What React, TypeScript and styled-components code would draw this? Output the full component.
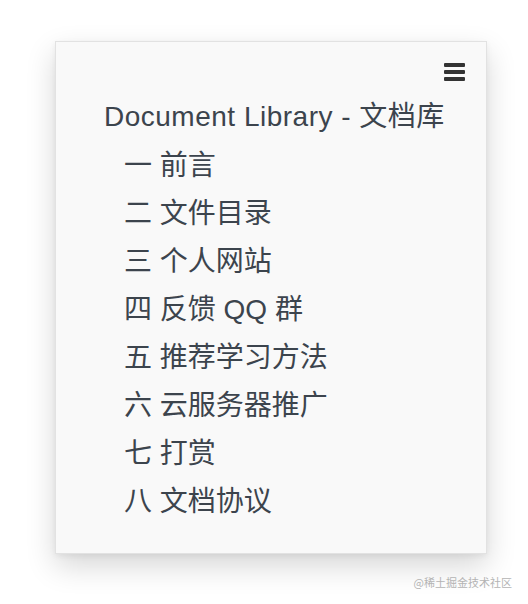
import React, { FC } from 'react';
import styled, { createGlobalStyle } from 'styled-components';

const GlobalStyle = createGlobalStyle`
  html, body {
    margin: 0;
    padding: 0;
    background: #ffffff;
  }
  body {
    font-family: 'Helvetica Neue', 'Liberation Sans', 'Noto Sans CJK SC', sans-serif;
  }
`;

const Page = styled.div`
  position: relative;
  width: 528px;
  height: 604px;
  padding: 41px 0 0 55px;
  box-sizing: border-box;
  overflow: hidden;
`;

const Card = styled.nav`
  width: 432px;
  height: 513px;
  box-sizing: border-box;
  background: #f9f9f9;
  border: 1px solid #e2e2e2;
  box-shadow: 0 12px 28px rgba(0, 0, 0, 0.16), 0 2px 6px rgba(0, 0, 0, 0.06);
  padding: 21px 21px 0 48px;
  display: flex;
  flex-direction: column;
`;

const Toolbar = styled.div`
  display: flex;
  justify-content: flex-end;
  height: 18px;
`;

const MenuButton = styled.button`
  border: 0;
  padding: 0;
  background: none;
  width: 21px;
  height: 18px;
  display: flex;
  flex-direction: column;
  justify-content: space-between;
  cursor: pointer;
`;

const Bar = styled.span`
  display: block;
  height: 4px;
  background: #333333;
  border-radius: 1px;
`;

const Title = styled.h1`
  margin: 12px 0 0;
  font-size: 28px;
  font-weight: 400;
  line-height: 48px;
  letter-spacing: 0.5px;
  color: #3c444d;
  white-space: nowrap;
`;

const List = styled.ul`
  list-style: none;
  margin: 0;
  padding: 1px 0 0 20px;
`;

const Item = styled.li`
  font-size: 28px;
  line-height: 48px;
  color: #3c444d;
  white-space: nowrap;
`;

const Watermark = styled.div`
  position: absolute;
  right: 16px;
  bottom: 15px;
  font-size: 11px;
  line-height: 14px;
  color: #b4b4b4;
  font-family: 'Noto Sans CJK SC', sans-serif;
`;

const chapters = [
  '一 前言',
  '二 文件目录',
  '三 个人网站',
  '四 反馈 QQ 群',
  '五 推荐学习方法',
  '六 云服务器推广',
  '七 打赏',
  '八 文档协议'
];

const App: FC = () => (
  <>
    <GlobalStyle />
    <Page>
      <Card>
        <Toolbar>
          <MenuButton aria-label="menu">
            <Bar />
            <Bar />
            <Bar />
          </MenuButton>
        </Toolbar>
        <Title>Document Library - 文档库</Title>
        <List>
          {chapters.map((c) => (
            <Item key={c}>{c}</Item>
          ))}
        </List>
      </Card>
      <Watermark>@稀土掘金技术社区</Watermark>
    </Page>
  </>
);

export default App;
